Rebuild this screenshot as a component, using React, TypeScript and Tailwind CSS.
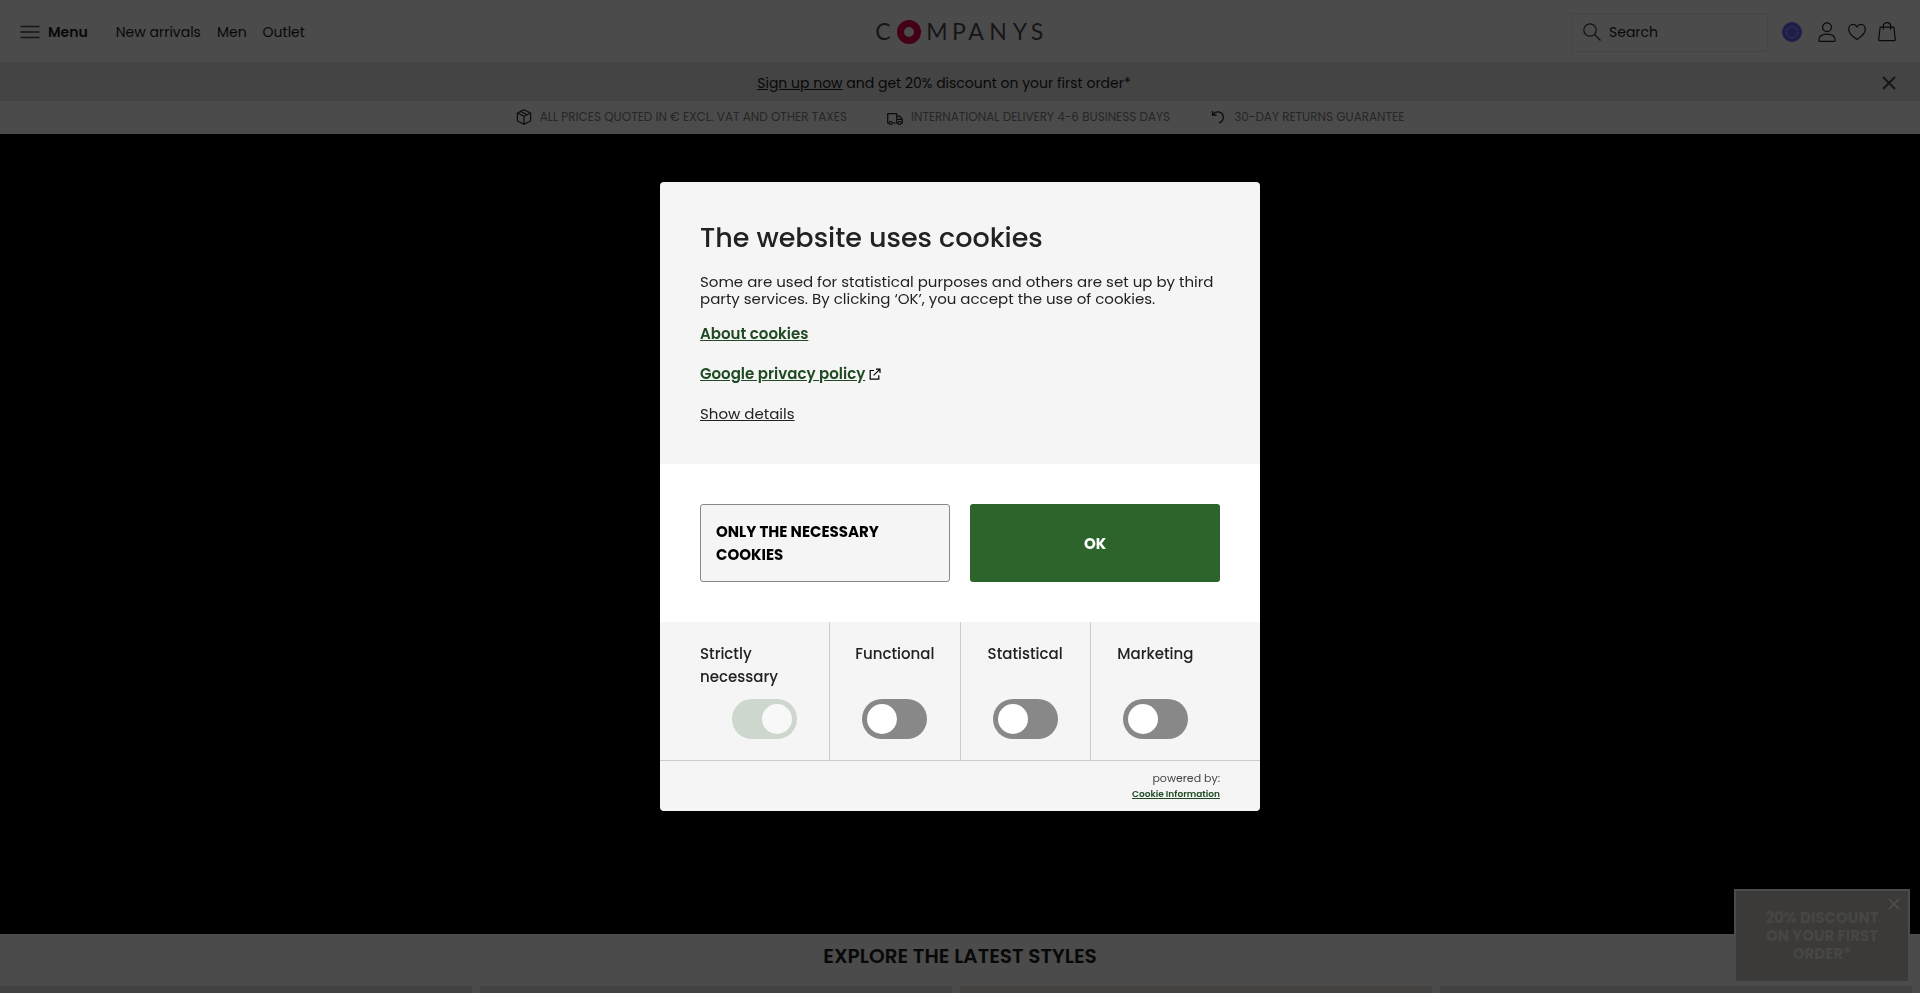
import React, { useState } from 'react';

const NAV_LINKS = ['New arrivals', 'Men', 'Outlet'];

const CATEGORIES = [
    { id: 'functional', label: 'Functional' },
    { id: 'statistical', label: 'Statistical' },
    { id: 'marketing', label: 'Marketing' },
];

const LOGO_LETTERS = [
    { char: 'C', x: 13 },
    { char: 'M', x: 67 },
    { char: 'P', x: 89 },
    { char: 'A', x: 106 },
    { char: 'N', x: 128 },
    { char: 'Y', x: 150 },
    { char: 'S', x: 167 },
];

const Logo: React.FC = () => (
    <svg className="w-44 h-8" viewBox="0 0 176 32" aria-label="Companys" role="img">
        {LOGO_LETTERS.map(({ char, x }) => (
            <text key={char} x={x} y="24" textAnchor="middle" fontSize="23" fontFamily="Lato, sans-serif" fill="#161616">
                {char}
            </text>
        ))}
        <circle cx="39" cy="16" r="8.5" fill="none" stroke="#440015" strokeWidth="7" />
    </svg>
);

const EuFlag: React.FC = () => (
    <svg className="w-5 h-5" viewBox="0 0 20 20">
        <circle cx="10" cy="10" r="10" fill="#1e1e4c" />
        {Array.from({ length: 12 }, (_, i) => {
            const angle = (i * Math.PI) / 6;
            return <circle key={i} cx={10 + 5.5 * Math.cos(angle)} cy={10 + 5.5 * Math.sin(angle)} r="0.6" fill="#55553a" />;
        })}
    </svg>
);

const CloseIcon: React.FC<{ className: string }> = ({ className }) => (
    <svg className={className} viewBox="0 0 14 14" fill="none" stroke="currentColor">
        <path d="M1 1l12 12M13 1L1 13" />
    </svg>
);

const Header: React.FC = () => (
    <header className="grid grid-cols-3 items-center shrink-0 h-[62px] pt-[2px] pl-5 pr-6">
        <div className="flex items-center text-sm">
            <button className="flex items-center gap-2 font-semibold mr-7">
                <svg className="w-5 h-4" viewBox="0 0 20 16" fill="none" stroke="#161616" strokeWidth="1.4">
                    <path d="M0.5 2.5h19M0.5 8h19M0.5 13.5h19" />
                </svg>
                Menu
            </button>
            <nav className="flex gap-4">
                {NAV_LINKS.map((link) => (
                    <a key={link} href="#">{link}</a>
                ))}
            </nav>
        </div>
        <a href="#" className="justify-self-center">
            <Logo />
        </a>
        <div className="flex items-center justify-end">
            <label className="flex items-center gap-2 w-[197px] h-[39px] pl-[11px] mr-[14px] border border-[#454545]">
                <svg className="w-[18px] h-[18px] shrink-0" viewBox="0 0 18 18" fill="none" stroke="#101010" strokeWidth="1.2">
                    <circle cx="7" cy="7" r="6.2" />
                    <path d="M11.5 11.5l6 6" />
                </svg>
                <input type="search" aria-label="Search" placeholder="Search" className="w-full bg-transparent text-sm outline-none placeholder:text-[#080808]" />
            </label>
            <button aria-label="Country" className="mr-4"><EuFlag /></button>
            <div className="flex gap-3 text-[#0a0a0a]">
                <button aria-label="Account">
                    <svg className="w-[18px] h-5" viewBox="0 0 18 20" fill="none" stroke="currentColor" strokeWidth="1.2">
                        <circle cx="9" cy="5.2" r="4.4" />
                        <path d="M0.8 18.2c0-4 3.4-6.1 8.2-6.1s8.2 2.1 8.2 6.1c0 .8-.4 1.1-1 1.1H1.8c-.6 0-1-.3-1-1.1z" />
                    </svg>
                </button>
                <button aria-label="Wishlist">
                    <svg className="w-[18px] h-5" viewBox="0 0 18 20" fill="none" stroke="currentColor" strokeWidth="1.2" strokeLinejoin="round">
                        <path d="M9 17.4C6.5 15.8.7 11.7.7 7.2.7 4.3 2.7 2.4 5 2.4c1.8 0 3.2 1 4 2.6.8-1.6 2.2-2.6 4-2.6 2.3 0 4.3 1.9 4.3 4.8 0 4.5-5.8 8.6-8.3 10.2z" />
                    </svg>
                </button>
                <button aria-label="Bag">
                    <svg className="w-[18px] h-5" viewBox="0 0 18 20" fill="none" stroke="currentColor" strokeWidth="1.2" strokeLinejoin="round">
                        <path d="M2.1 5.2h13.8l1.3 12.2c.1.8-.4 1.3-1.1 1.3H1.9c-.7 0-1.2-.5-1.1-1.3z" />
                        <path d="M5.3 7.8V4.3C5.3 2 6.9.7 9 .7s3.7 1.3 3.7 3.6v3.5" />
                    </svg>
                </button>
            </div>
        </div>
    </header>
);

const UspBar: React.FC = () => (
    <ul className="flex justify-center gap-10 shrink-0 h-[33px] pb-[2px] items-center text-xs text-[#262626]">
        <li className="flex items-center gap-2">
            <svg className="w-4 h-4" viewBox="0 0 16 16" fill="none" stroke="#0c0c0c" strokeWidth="1.2" strokeLinejoin="round">
                <path d="M8 .8l6.6 3.2v8L8 15.2 1.4 12V4zM1.4 4L8 7.2 14.6 4M8 7.2v8M4.6 2.5l6.6 3.2" />
            </svg>
            ALL PRICES QUOTED IN € EXCL. VAT AND OTHER TAXES
        </li>
        <li className="flex items-center gap-2">
            <svg className="w-4 h-4" viewBox="0 0 16 16" fill="none" stroke="#0c0c0c" strokeWidth="1.2" strokeLinejoin="round">
                <path d="M2 14H.7V4.6h9.1V14H5.2M9.8 7.2h3l2.5 3.2V14h-1.1M9.8 14h1.3M9.8 10.4h5.5" />
                <circle cx="3.6" cy="14" r="1.5" />
                <circle cx="12.6" cy="14" r="1.5" />
            </svg>
            INTERNATIONAL DELIVERY 4-6 BUSINESS DAYS
        </li>
        <li className="flex items-center gap-2">
            <svg className="w-4 h-4" viewBox="0 0 16 16" fill="none" stroke="#0c0c0c" strokeWidth="1.3">
                <path d="M2.5 2v4h4M2.7 5.6C4.6 3 7.2 2.4 9.6 3.2c2.6.9 4 3.3 3.6 6-.3 2.2-2 4.1-4.4 4.6" />
            </svg>
            30-DAY RETURNS GUARANTEE
        </li>
    </ul>
);

interface ToggleProps {
    label: string;
    checked: boolean;
    disabled?: boolean;
    onChange?: () => void;
}

const Toggle: React.FC<ToggleProps> = ({ label, checked, disabled, onChange }) => (
    <label className="flex flex-col justify-between items-center h-full pt-5 pb-[21px] text-[15px] leading-[23px] font-medium">
        {/* narrow enough that a two word label wraps */}
        <span className={disabled ? 'self-stretch pr-8' : ''}>{label}</span>
        <input type="checkbox" className="sr-only" checked={checked} disabled={disabled} onChange={onChange} />
        <span
            className={`flex w-[65px] h-10 p-[5px] rounded-full
        ${checked ? 'justify-end' : 'justify-start'}
        ${disabled ? 'bg-[#cdd7cd]' : checked ? 'bg-[#2c642c]' : 'bg-[#888888]'}`}
        >
            <span className={`w-[30px] h-[30px] rounded-full ${disabled ? 'bg-[#f7f8f7]' : 'bg-white'}`} />
        </span>
    </label>
);

const CookieDialog: React.FC = () => {
    const [consent, setConsent] = useState<Record<string, boolean>>({});

    const toggle = (id: string) => setConsent((prev) => ({ ...prev, [id]: !prev[id] }));

    return (
        <div className="fixed inset-0 z-20 flex items-center justify-center">
            <div role="dialog" aria-labelledby="cookie-title" className="w-[600px] rounded overflow-hidden bg-[#f5f5f5] text-[#222222]">
                <div className="px-10 pt-9 pb-10">
                    <h2 id="cookie-title" className="text-[27px] leading-10 font-medium">The website uses cookies</h2>
                    <p className="mt-[15px] text-[15px] leading-[17px]">
                        Some are used for statistical purposes and others are set up by third party services. By clicking ‘OK’, you accept the use of cookies.
                    </p>
                    <div className="flex flex-col items-start gap-5 mt-[17px] text-[15px] leading-5">
                        <a href="#" className="font-semibold underline text-[#1f4a23]">About cookies</a>
                        <div className="flex items-center gap-1">
                            <a href="#" className="font-semibold underline text-[#1f4a23]">Google privacy policy</a>
                            <svg className="w-3 h-3" viewBox="0 0 12 12" fill="none" stroke="#000000" strokeWidth="1.2">
                                <path d="M5 2.5H1.2v8.7h8.6V7.2M7 1.1h4v4M11 1.1L4.6 7.4" />
                            </svg>
                        </div>
                        <button className="underline">Show details</button>
                    </div>
                </div>
                <div className="grid grid-cols-2 gap-5 p-10 bg-white text-[15px] leading-[23px] font-bold">
                    <button className="h-[78px] px-[15px] border border-[#888888] rounded-[3px] bg-[#f5f5f5] text-left text-black">
                        ONLY THE NECESSARY COOKIES
                    </button>
                    <button className="h-[78px] rounded-[3px] bg-[#2c642c] text-white">OK</button>
                </div>
                <div className="flex h-[139px] px-10 border-b border-[#cccccc]">
                    <div className="flex-1">
                        <Toggle label="Strictly necessary" checked disabled />
                    </div>
                    {CATEGORIES.map(({ id, label }) => (
                        <div key={id} className="flex-1 border-l border-[#cccccc]">
                            <Toggle label={label} checked={!!consent[id]} onChange={() => toggle(id)} />
                        </div>
                    ))}
                </div>
                <div className="flex flex-col items-end h-[50px] px-10 pt-[9px]">
                    <span className="text-[11px] leading-4 text-[#444444]">powered by:</span>
                    <a href="#" className="text-[9px] leading-4 font-semibold underline text-[#1f4a23]">Cookie Information</a>
                </div>
            </div>
        </div>
    );
};

const App: React.FC = () => {
    return (
        <div className="flex flex-col h-screen overflow-hidden bg-[#4b4b4b] text-[#080808] font-['Poppins','Inter',sans-serif]">
            <Header />
            <div className="flex items-center shrink-0 h-[39px] pt-[2px] pl-[6px] pr-6 bg-[#444444] text-sm">
                <p className="flex-1 text-center">
                    <a href="#" className="underline">Sign up now</a> and get 20% discount on your first order*
                </p>
                <button aria-label="Close" className="text-[#161616]">
                    <CloseIcon className="w-[14px] h-[14px] stroke-2" />
                </button>
            </div>
            <UspBar />
            <div className="h-[800px] shrink-0 bg-black" />
            <section>
                <h2 className="h-[52px] pt-2 text-center text-xl leading-7 font-semibold">EXPLORE THE LATEST STYLES</h2>
                <div className="grid grid-cols-4 gap-2 pr-2">
                    <div className="h-[600px] bg-[#414141]" />
                    <div className="h-[600px] bg-[#434343]" />
                    <div className="h-[600px] bg-[#434240]" />
                    <div className="h-[600px] bg-[#414141]" />
                </div>
            </section>
            <aside className="fixed right-[10px] bottom-[10px] w-44 h-[94px] border-2 border-[#4b4b4b] bg-[#3b3a38] text-[#474644]">
                <a href="#" className="block px-6 pt-[18px] text-center text-[15px] leading-[18px] font-bold">20% DISCOUNT ON YOUR FIRST ORDER*</a>
                <button aria-label="Close offer" className="absolute top-[7px] right-2 text-[#4e4d4b]">
                    <CloseIcon className="block w-3 h-3 stroke-2" />
                </button>
            </aside>
            <CookieDialog />
        </div>
    );
};

export default App;
